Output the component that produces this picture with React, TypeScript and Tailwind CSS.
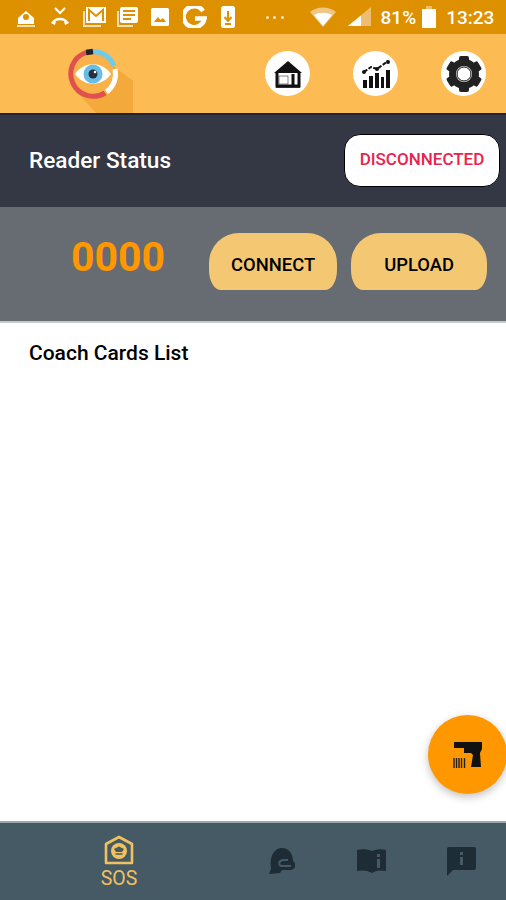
import React from "react";

const statusIcons: React.ReactNode[] = [
  <g key="a">
    <path d="M3 12 L11 5 L19 12 V18 H3 Z" fill="#fff" />
    <circle cx="11" cy="11" r="3" fill="#dd9000" />
    <path d="M2 19 H20 V21 H2 Z" fill="#f8dfb0" />
  </g>,
  <g key="b">
    <path d="M2 17 C6 10 16 10 20 17 L16 19 L15 15 C12 14 10 14 7 15 L6 19 Z" fill="#fff" />
    <path d="M6 2 L11 7 L16 2" fill="none" stroke="#fff" strokeWidth="2" />
  </g>,
  <g key="c">
    <path d="M1 5 H3 V19 H19 V21 H1 Z" fill="#f8dfb0" />
    <rect x="4" y="1" width="20" height="16" fill="#fff" />
    <path d="M7 15 V4 L14 10 L21 4 V15" fill="none" stroke="#dd9000" strokeWidth="2" />
  </g>,
  <g key="d">
    <path d="M1 5 H3 V19 H17 V21 H1 Z" fill="#f8dfb0" />
    <rect x="4" y="1" width="18" height="16" rx="2" fill="#fff" />
    <path d="M7 5 H19 M7 9 H19 M7 13 H15" stroke="#dd9000" strokeWidth="2" />
  </g>,
  <g key="e">
    <rect x="2" y="2" width="18" height="18" rx="1.5" fill="#fff" />
    <path d="M5 16 L9 11 L11.5 14 L14 12 L17 16 Z" fill="#dd9000" />
  </g>,
  <g key="f">
    <path d="M20 5 A10.5 10.5 0 1 0 21.5 12.5 H12" fill="none" stroke="#fff" strokeWidth="4.5" />
  </g>,
  <g key="g">
    <rect x="4" y="0" width="14" height="22" rx="2.5" fill="#fff" />
    <path d="M11 5 V13 M7.5 11 L11 15 L14.5 11" fill="none" stroke="#dd9000" strokeWidth="2" />
    <path d="M8 18 H14" stroke="#dd9000" strokeWidth="2" />
  </g>,
];

function Logo() {
  return (
    <svg width="70" height="80" viewBox="0 0 70 80" className="block">
      <path d="M30 60 L46 32 L66 47 V79 H30 Z" fill="#f4a93c" />
      <path d="M8 56 L46 32 L66 47 V79 H29 Z" fill="#f4a93c" />
      <circle cx="26" cy="40" r="21" fill="#f9b24a" />
      <path d="M24 17.5 A22.5 22.5 0 0 1 47 32" fill="none" stroke="#6fcbe9" strokeWidth="5" />
      <path d="M48 35 A22.5 22.5 0 0 1 39.5 58" fill="none" stroke="#fff" strokeWidth="5" />
      <path d="M38 59 A22.5 22.5 0 1 1 19 18.5" fill="none" stroke="#e0504f" strokeWidth="5" />
      <path d="M19 18.5 L26 17.5" fill="none" stroke="#1c2430" strokeWidth="5.5" />
      <path d="M8 40 C17 27 35 27 44 40 C35 53 17 53 8 40 Z" fill="#fff" />
      <circle cx="26" cy="40" r="9.5" fill="#66bde6" />
      <circle cx="26" cy="40" r="4.5" fill="#27303c" />
      <circle cx="28" cy="38" r="1.3" fill="#fff" />
    </svg>
  );
}

function HomeIcon() {
  return (
    <svg width="30" height="28" viewBox="0 0 30 28">
      <path d="M15 1 L29 13 H1 Z" fill="#111" />
      <path d="M4 13 V26 H26 V13" fill="none" stroke="#111" strokeWidth="3" />
      <rect x="6" y="16" width="9" height="8" fill="#fff" stroke="#111" strokeWidth="0.5" />
      <path d="M20 14 V26" stroke="#111" strokeWidth="3" />
      <path d="M3 26.5 H27" stroke="#111" strokeWidth="2.5" />
    </svg>
  );
}

function ChartIcon() {
  return (
    <svg width="30" height="30" viewBox="0 0 30 30">
      <path d="M3 13 L10 8 L16 10 L27 2" fill="none" stroke="#111" strokeWidth="2" strokeDasharray="4 1.5" />
      <circle cx="3" cy="13" r="2" fill="#111" />
      <circle cx="16" cy="10" r="2" fill="#111" />
      <circle cx="27" cy="3" r="2" fill="#111" />
      <rect x="2" y="21" width="4" height="8" fill="#111" />
      <rect x="8" y="17" width="4" height="12" fill="#111" />
      <rect x="14" y="14" width="4" height="15" fill="#111" />
      <rect x="20" y="18" width="3" height="11" fill="#111" />
      <rect x="25" y="11" width="4" height="18" fill="#111" />
    </svg>
  );
}

function GearIcon() {
  const teeth = [0, 60, 120, 180, 240, 300];
  return (
    <svg width="36" height="38" viewBox="0 0 36 38">
      {teeth.map((deg) => (
        <rect key={deg} x="13" y="1" width="10" height="8" rx="2" fill="#222" transform={`rotate(${deg} 18 19)`} />
      ))}
      <circle cx="18" cy="19" r="11.5" fill="none" stroke="#222" strokeWidth="7" />
      <circle cx="18" cy="19" r="7" fill="#fff" stroke="#111" strokeWidth="1" />
    </svg>
  );
}

export default function App() {
  return (
    <div className="relative flex h-[900px] w-[506px] flex-col overflow-hidden bg-white font-['Roboto',sans-serif]">
      {/* status bar */}
      <div className="flex h-[34px] items-center bg-[#dd9000] pl-[15px] text-white">
        <div className="flex gap-[9.6px]">
          {statusIcons.map((icon, i) => (
            <svg key={i} width="24" height="22" viewBox="0 0 24 22">
              {icon}
            </svg>
          ))}
        </div>
        <div className="ml-[25px] flex w-[18px] justify-between">
          <span className="h-[3px] w-[3px] rounded-full bg-[#fbe6c0]" />
          <span className="h-[3px] w-[3px] rounded-full bg-[#fbe6c0]" />
          <span className="h-[3px] w-[3px] rounded-full bg-[#fbe6c0]" />
        </div>
        <svg width="26" height="20" viewBox="0 0 26 20" className="ml-[26px]">
          <path d="M0 5 C7 -1 19 -1 26 5 L13 20 Z" fill="#f0c684" />
          <path d="M4 8 C9 5 17 5 22 8 L13 19 Z" fill="#fff" />
        </svg>
        <svg width="24" height="20" viewBox="0 0 24 20" className="ml-[12px]">
          <path d="M0 19 L23 0 V19 Z" fill="#efbd72" />
          <path d="M0 19 L13 8.5 V19 Z" fill="#fff" />
        </svg>
        <span className="ml-[9px] text-[19px] leading-none font-medium">81%</span>
        <svg width="14" height="22" viewBox="0 0 14 22" className="ml-[6px]">
          <path d="M4 0 H10 V3 H4 Z" fill="#efbd72" />
          <rect x="0" y="3" width="14" height="19" fill="#fff" />
        </svg>
        <span className="ml-[10px] text-[19px] leading-none font-medium">13:23</span>
      </div>

      {/* header */}
      <div className="flex h-[79px] items-start justify-between bg-[#fcbb53] pr-5 pl-[67px]">
        <Logo />
        <div className="mt-[17px] flex gap-[43px]">
          <div className="flex h-[45px] w-[45px] items-center justify-center rounded-full bg-white">
            <HomeIcon />
          </div>
          <div className="flex h-[45px] w-[45px] items-center justify-center rounded-full bg-white">
            <ChartIcon />
          </div>
          <div className="flex h-[45px] w-[45px] items-center justify-center rounded-full bg-white">
            <GearIcon />
          </div>
        </div>
      </div>

      {/* reader status */}
      <div className="flex h-[94px] items-center justify-between border-t-2 border-[#1f2430] bg-[#333844] pr-[6px] pl-[29px]">
        <span className="text-[22.6px] font-medium text-white">Reader Status</span>
        <div className="mb-[2px] flex h-[53px] w-[156px] items-center justify-center rounded-[16px] border border-black bg-white">
          <span className="text-[17px] font-medium text-[#e8234d]">DISCONNECTED</span>
        </div>
      </div>

      {/* connect row */}
      <div className="flex h-[116px] items-start border-b-2 border-[#c9cacc] bg-[#676b72] pl-[71px]">
        <span className="mt-[24px] text-[41px] leading-[52px] font-bold text-[#ff9800]">0000</span>
        <button type="button" className="mt-[26px] ml-[44px] h-[57px] w-[128px] rounded-[30px_30px_12px_12px/30px_30px_20px_20px] bg-[#f4c873] pt-[6px] text-[18.4px] font-medium text-black">
          CONNECT
        </button>
        <button type="button" className="mt-[26px] ml-[14px] h-[57px] w-[136px] rounded-[30px_30px_12px_12px/30px_30px_20px_20px] bg-[#f4c873] pt-[6px] text-[18.4px] font-medium text-black">
          UPLOAD
        </button>
      </div>

      {/* list */}
      <div className="flex-1 bg-white px-[29px] pt-[17px]">
        <span className="text-[21px] leading-[26px] font-medium text-black">Coach Cards List</span>
      </div>

      {/* bottom nav */}
      <div className="-mt-px flex h-[79px] border-t-2 border-[#9aa7af] bg-[#455a64]">
        <div className="ml-[99px] flex w-[40px] flex-col items-center pt-[12px]">
          <svg width="30" height="30" viewBox="0 0 30 30">
            <path d="M2 9 L15 2 L28 9 V28 H2 Z" fill="none" stroke="#f0c15f" strokeWidth="2.6" strokeLinejoin="round" />
            <circle cx="15" cy="16" r="8" fill="#f0c15f" />
            <path d="M10 14 L15 11.5 L20 14 L18 17 H12 Z" fill="#455a64" />
            <path d="M11.5 19 H18.5" stroke="#455a64" strokeWidth="1.5" />
          </svg>
          <span className="mt-[3px] text-[19.5px] leading-[22px] text-[#f0c15f]">SOS</span>
        </div>
        <div className="ml-[129px] pt-[24px]">
          <svg width="28" height="28" viewBox="0 0 28 28">
            <path d="M1 27 L3 22 C1 8 7 1 14 1 C21 1 25 7 25 14 L27 16 V20 C26 22 24 23 22 23 L14 23 L12 26 L1 27 Z" fill="#1e2c35" />
            <path d="M23 19 H15 C10 19 10 14 15 13 H20" fill="none" stroke="#455a64" strokeWidth="2" />
          </svg>
        </div>
        <div className="ml-[61px] pt-[25px]">
          <svg width="30" height="26" viewBox="0 0 30 26">
            <path d="M0 2 C5 1 10 1 15 3 C20 1 25 1 29 2 V23 C24 22 19 22 15 25 C10 22 5 22 0 23 Z" fill="#1e2c35" />
            <rect x="20" y="6" width="3" height="3" fill="#455a64" />
            <rect x="20" y="11" width="3" height="9" fill="#455a64" />
          </svg>
        </div>
        <div className="ml-[60px] pt-[24px]">
          <svg width="29" height="29" viewBox="0 0 29 29">
            <path d="M2 0 H27 A2 2 0 0 1 29 2 V21 A2 2 0 0 1 27 23 H6 L0 29 V2 A2 2 0 0 1 2 0 Z" fill="#1e2c35" />
            <rect x="13" y="5" width="3" height="3" fill="#455a64" />
            <rect x="13" y="10" width="3" height="8" fill="#455a64" />
          </svg>
        </div>
      </div>

      {/* scan fab */}
      <button type="button" className="absolute top-[715px] left-[428px] flex h-[79px] w-[79px] items-center justify-center rounded-full bg-[#ff9800] shadow-[0_3px_8px_rgba(0,0,0,0.25)]">
        <svg width="30" height="28" viewBox="0 0 30 28">
          <path d="M1 1 H29 V8 L27 12 L28 26 H18 L20 14 L18 12 H11 V7 H1 Z" fill="#111" />
          <path d="M1 17 V27 M3.5 17 V27 M6 17 V27 M8.5 17 V27 M11.5 17 V27" stroke="#222" strokeWidth="1.4" />
        </svg>
      </button>
    </div>
  );
}
